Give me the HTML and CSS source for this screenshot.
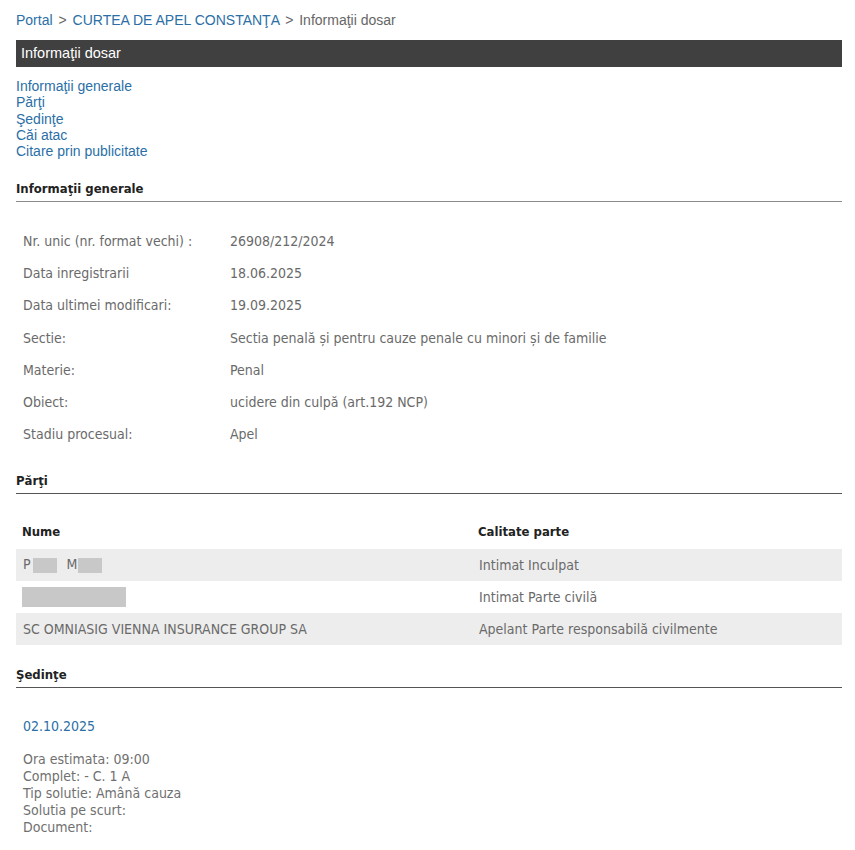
FILE: index.html
```html
<!DOCTYPE html>
<html lang="ro">
<head>
    <meta charset="UTF-8">
    <title>Informaţii dosar</title>
    <link rel="stylesheet" href="styles.css">
</head>
<body>
    <div class="page">
        <!-- breadcrumb -->
        <div class="breadcrumb">
            <a href="#">Portal</a> <span class="sep">&gt;</span> <a href="#">CURTEA DE APEL CONSTANŢA</a> <span class="sep">&gt;</span> <span class="current">Informaţii dosar</span>
        </div>

        <div class="title-bar">Informaţii dosar</div>

        <ul class="toc">
            <li><a href="#generale">Informaţii generale</a></li>
            <li><a href="#parti">Părţi</a></li>
            <li><a href="#sedinte">Şedinţe</a></li>
            <li><a href="#cai">Căi atac</a></li>
            <li><a href="#citare">Citare prin publicitate</a></li>
        </ul>

        <!-- informatii generale -->
        <h3 class="section-title light" id="generale">Informaţii generale</h3>
        <table class="info">
            <tr><td class="label">Nr. unic (nr. format vechi) :</td><td>26908/212/2024</td></tr>
            <tr><td class="label">Data inregistrarii</td><td>18.06.2025</td></tr>
            <tr><td class="label">Data ultimei modificari:</td><td>19.09.2025</td></tr>
            <tr><td class="label">Sectie:</td><td>Sectia penală și pentru cauze penale cu minori și de familie</td></tr>
            <tr><td class="label">Materie:</td><td>Penal</td></tr>
            <tr><td class="label">Obiect:</td><td>ucidere din culpă (art.192 NCP)</td></tr>
            <tr><td class="label">Stadiu procesual:</td><td>Apel</td></tr>
        </table>

        <!-- parti -->
        <h3 class="section-title" id="parti">Părţi</h3>
        <table class="parti">
            <tr class="head"><th>Nume</th><th>Calitate parte</th></tr>
            <tr class="odd"><td>P<span class="redact r1"></span>M<span class="redact r2"></span></td><td>Intimat Inculpat</td></tr>
            <tr><td><span class="redact r3"></span></td><td>Intimat Parte civilă</td></tr>
            <tr class="odd"><td>SC OMNIASIG VIENNA INSURANCE GROUP SA</td><td>Apelant Parte responsabilă civilmente</td></tr>
        </table>

        <!-- sedinte -->
        <h3 class="section-title" id="sedinte">Şedinţe</h3>
        <div class="sedinta">
            <div class="sedinta-data">02.10.2025</div>
            <div class="sedinta-detalii">
                Ora estimata: 09:00<br>
                Complet: - C. 1 A<br>
                Tip solutie: Amână cauza<br>
                Solutia pe scurt:<br>
                Document:
            </div>
        </div>
    </div>
</body>
</html>
```

FILE: styles.css
```css
body {
    margin: 0;
    background-color: #ffffff;
    font-family: 'Liberation Sans', Arial, sans-serif;
    font-size: 14px;
    color: #666;
}

a {
    color: #2b6fa6;
    text-decoration: none;
}

.page {
    width: 826px;
    margin-left: 16px;
    padding-top: 12px;
}

/* breadcrumb */
.breadcrumb {
    font-size: 14px;
    line-height: 16px;
    height: 28px;
}

.breadcrumb .sep {
    color: #666;
    margin: 0 2px;
}

.breadcrumb .current {
    color: #666;
}

.title-bar {
    background-color: #404040;
    color: #fff;
    font-size: 14.5px;
    height: 27px;
    line-height: 27px;
    padding-left: 5px;
}

.toc {
    list-style: none;
    margin: 11px 0 0;
    padding: 0;
}

.toc li {
    line-height: 16.3px;
}

/* sectiuni */
.section-title {
    font-family: 'DejaVu Sans Condensed', 'DejaVu Sans', sans-serif;
    font-size: 13px;
    font-weight: bold;
    color: #222;
    margin: 22px 0 0;
    padding-bottom: 5px;
    border-bottom: 1px solid #555;
}

.section-title.light {
    border-bottom-color: #8a8a8a;
}

.info,
.parti {
    width: 100%;
    border-collapse: collapse;
    font-family: 'DejaVu Sans Condensed', 'DejaVu Sans', sans-serif;
    font-size: 14px;
    color: #6a6a6a;
}

.info {
    margin-top: 22px;
}

.info td {
    height: 32.3px;
    padding: 0 0 0 7px;
}

.info td.label {
    width: 200px;
}

.parti {
    margin-top: 21px;
}

.parti th {
    text-align: left;
    font-weight: bold;
    font-size: 13px;
    color: #222;
    height: 34px;
    padding: 0 0 0 6px;
}

.parti th:first-child {
    width: 450px;
}

.parti td {
    height: 32.3px;
    padding: 0 0 0 7px;
}

.parti tr.odd td {
    background-color: #ededed;
}

.redact {
    display: inline-block;
    background-color: #c8c8c8;
    vertical-align: middle;
}

.r1 {
    width: 24px;
    height: 15px;
    margin: 0 10px 0 2px;
}

.r2 {
    width: 24px;
    height: 15px;
    margin-left: 1px;
}

.r3 {
    width: 104px;
    height: 20px;
    margin-left: -1px;
}

.sedinta {
    padding: 30px 0 0 7px;
    font-family: 'DejaVu Sans Condensed', 'DejaVu Sans', sans-serif;
}

.sedinta-data {
    color: #2b6fa6;
    font-size: 14px;
    margin-bottom: 17px;
}

.sedinta-detalii {
    font-size: 14px;
    line-height: 17px;
    color: #707070;
}
```
